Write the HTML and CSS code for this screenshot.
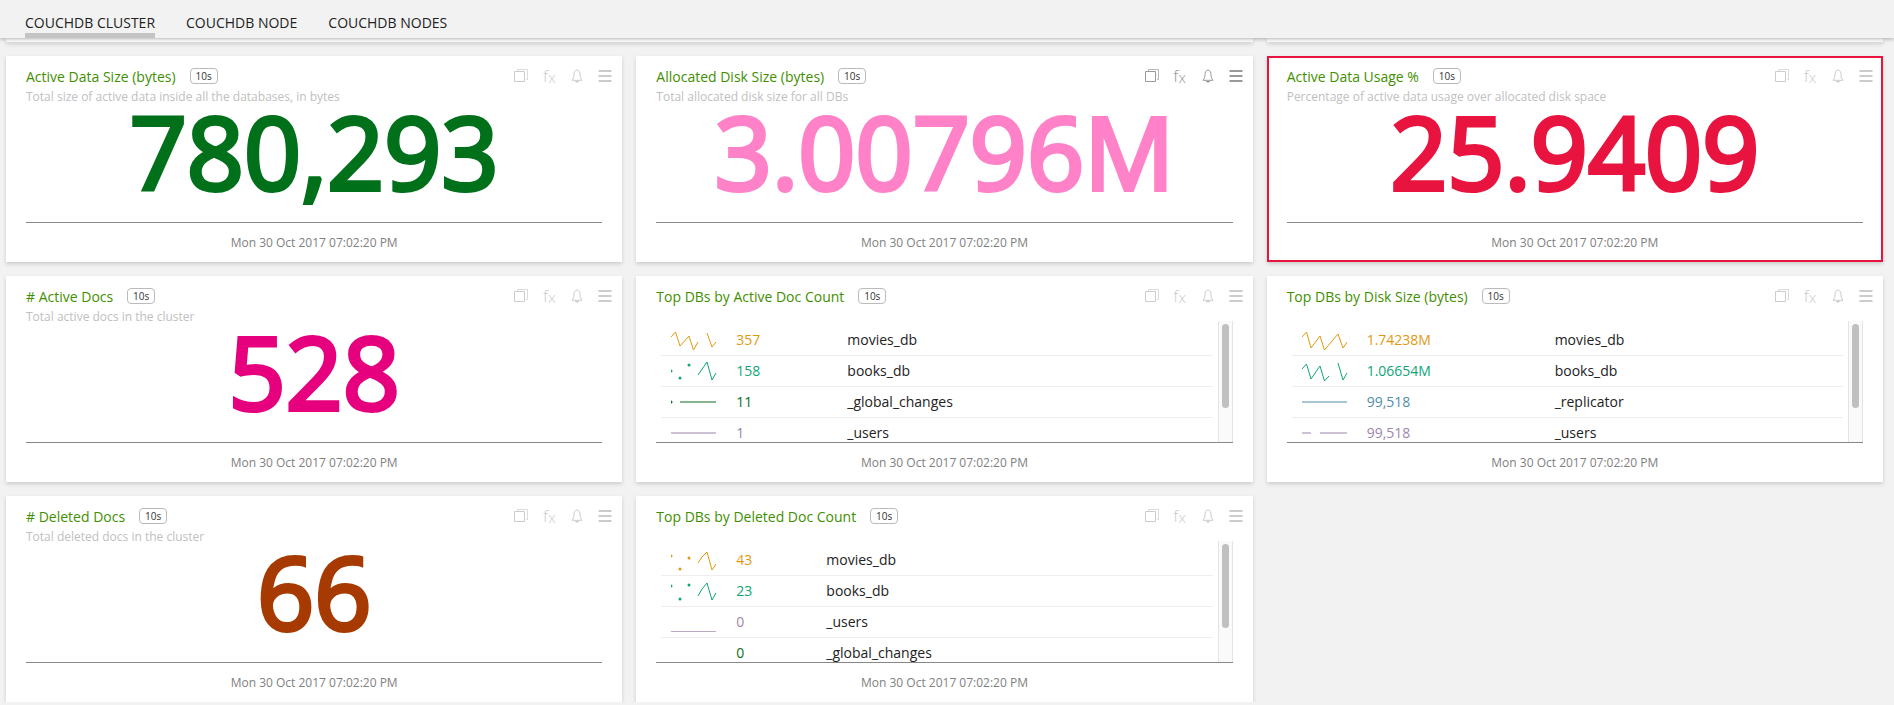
FILE: index.html
```html
<!DOCTYPE html>
<html lang="en">
<head>
<meta charset="utf-8">
<title>CouchDB Cluster</title>
<link rel="stylesheet" href="styles.css">
</head>
<body>
<svg class="defs" aria-hidden="true">
  <symbol id="copy" viewBox="0 0 16 16"><path d="M4.5 3V1.5h10v10H13" fill="none" stroke="currentColor" opacity=".7"/><path d="M1.5 3.5h10v10h-10z" fill="none" stroke="currentColor"/></symbol>
  <symbol id="bell" viewBox="0 0 16 16"><path d="M8 2C5.600 2.400 5 4.600 5 6.500C5 9.500 4.300 10.600 3 12.300h10C11.700 10.600 11 9.500 11 6.500C11 4.600 10.400 2.400 8 2z" fill="none" stroke="currentColor"/><path d="M6 13h4c-.4 2-3.600 2-4 0z" fill="currentColor"/></symbol>
  <symbol id="menu" viewBox="0 0 16 16"><path d="M1.500 3h13M1.500 8h13M1.500 13h13" stroke="currentColor" stroke-width="2"/></symbol>
</svg>
<nav class="tabs">
  <a class="tab active" href="#cluster" aria-current="page">COUCHDB CLUSTER</a>
  <a class="tab" href="#node">COUCHDB NODE</a>
  <a class="tab" href="#nodes">COUCHDB NODES</a>
</nav>
<main class="grid">
  <div class="card-end wide-end"></div><div class="card-end"></div>

  <section class="card">
    <header class="head"><h2 class="title">Active Data Size (bytes)</h2><span class="badge">10s</span>
      <div class="tools"><button class="tool" aria-label="Copy"><svg class="icon"><use href="#copy"/></svg></button><button class="tool fx" aria-label="Function">f<span class="fx-x">x</span></button><button class="tool" aria-label="Alerts"><svg class="icon"><use href="#bell"/></svg></button><button class="tool" aria-label="Menu"><svg class="icon"><use href="#menu"/></svg></button></div></header>
    <p class="desc">Total size of active data inside all the databases, in bytes</p>
    <div class="body"><strong class="value green">780,293</strong></div>
    <footer class="foot">Mon 30 Oct 2017 07:02:20 PM</footer>
  </section>

  <section class="card hovered">
    <header class="head"><h2 class="title">Allocated Disk Size (bytes)</h2><span class="badge">10s</span>
      <div class="tools"><button class="tool" aria-label="Copy"><svg class="icon"><use href="#copy"/></svg></button><button class="tool fx" aria-label="Function">f<span class="fx-x">x</span></button><button class="tool" aria-label="Alerts"><svg class="icon"><use href="#bell"/></svg></button><button class="tool" aria-label="Menu"><svg class="icon"><use href="#menu"/></svg></button></div></header>
    <p class="desc">Total allocated disk size for all DBs</p>
    <div class="body"><strong class="value pink">3.00796M</strong></div>
    <footer class="foot">Mon 30 Oct 2017 07:02:20 PM</footer>
  </section>

  <section class="card alert">
    <header class="head"><h2 class="title">Active Data Usage %</h2><span class="badge">10s</span>
      <div class="tools"><button class="tool" aria-label="Copy"><svg class="icon"><use href="#copy"/></svg></button><button class="tool fx" aria-label="Function">f<span class="fx-x">x</span></button><button class="tool" aria-label="Alerts"><svg class="icon"><use href="#bell"/></svg></button><button class="tool" aria-label="Menu"><svg class="icon"><use href="#menu"/></svg></button></div></header>
    <p class="desc">Percentage of active data usage over allocated disk space</p>
    <div class="body"><strong class="value red">25.9409</strong></div>
    <footer class="foot">Mon 30 Oct 2017 07:02:20 PM</footer>
  </section>

  <section class="card">
    <header class="head"><h2 class="title"># Active Docs</h2><span class="badge">10s</span>
      <div class="tools"><button class="tool" aria-label="Copy"><svg class="icon"><use href="#copy"/></svg></button><button class="tool fx" aria-label="Function">f<span class="fx-x">x</span></button><button class="tool" aria-label="Alerts"><svg class="icon"><use href="#bell"/></svg></button><button class="tool" aria-label="Menu"><svg class="icon"><use href="#menu"/></svg></button></div></header>
    <p class="desc">Total active docs in the cluster</p>
    <div class="body"><strong class="value magenta">528</strong></div>
    <footer class="foot">Mon 30 Oct 2017 07:02:20 PM</footer>
  </section>

  <section class="card">
    <header class="head"><h2 class="title">Top DBs by Active Doc Count</h2><span class="badge">10s</span>
      <div class="tools"><button class="tool" aria-label="Copy"><svg class="icon"><use href="#copy"/></svg></button><button class="tool fx" aria-label="Function">f<span class="fx-x">x</span></button><button class="tool" aria-label="Alerts"><svg class="icon"><use href="#bell"/></svg></button><button class="tool" aria-label="Menu"><svg class="icon"><use href="#menu"/></svg></button></div></header>
    <div class="list">
      <table class="table medium">
        <tr class="row amber"><td class="trend"><svg class="spark" viewBox="0 0 46 22"><path d="M0 8L4.500 3L9 17L18 7L22.500 21L27 13M36 4L41 18L45 13"/></svg></td><td class="num">357</td><td class="name">movies_db</td></tr>
        <tr class="row teal"><td class="trend"><svg class="spark" viewBox="0 0 46 22"><path d="M27 15L36 2L41 20L45 13"/><circle cx="0" cy="11" r="1.500"/><circle cx="9" cy="18" r="1.500"/><circle cx="18" cy="5" r="1.500"/></svg></td><td class="num">158</td><td class="name">books_db</td></tr>
        <tr class="row forest"><td class="trend"><svg class="spark" viewBox="0 0 46 22"><path class="flat" d="M9 11H45"/><circle cx="0" cy="11" r="1.500"/></svg></td><td class="num">11</td><td class="name">_global_changes</td></tr>
        <tr class="row violet"><td class="trend"><svg class="spark" viewBox="0 0 46 22"><path class="flat" d="M0 11H45"/></svg></td><td class="num">1</td><td class="name">_users</td></tr>
      </table>
      <div class="track"><div class="thumb"></div></div>
    </div>
    <footer class="foot">Mon 30 Oct 2017 07:02:20 PM</footer>
  </section>

  <section class="card">
    <header class="head"><h2 class="title">Top DBs by Disk Size (bytes)</h2><span class="badge">10s</span>
      <div class="tools"><button class="tool" aria-label="Copy"><svg class="icon"><use href="#copy"/></svg></button><button class="tool fx" aria-label="Function">f<span class="fx-x">x</span></button><button class="tool" aria-label="Alerts"><svg class="icon"><use href="#bell"/></svg></button><button class="tool" aria-label="Menu"><svg class="icon"><use href="#menu"/></svg></button></div></header>
    <div class="list">
      <table class="table wide">
        <tr class="row amber"><td class="trend"><svg class="spark" viewBox="0 0 46 22"><path d="M0 8L4.500 3L9 19L18 7L22.500 21L36 5L41 19L45 13"/></svg></td><td class="num">1.74238M</td><td class="name">movies_db</td></tr>
        <tr class="row teal"><td class="trend"><svg class="spark" viewBox="0 0 46 22"><path d="M0 9L4.500 4L9 19L18 6L22.500 21L27 16M36 3L41 20L45 13"/></svg></td><td class="num">1.06654M</td><td class="name">books_db</td></tr>
        <tr class="row blue"><td class="trend"><svg class="spark" viewBox="0 0 46 22"><path class="flat" d="M0 11H45"/></svg></td><td class="num">99,518</td><td class="name">_replicator</td></tr>
        <tr class="row violet"><td class="trend"><svg class="spark" viewBox="0 0 46 22"><path class="flat" d="M0 11H9M18 11H45"/></svg></td><td class="num">99,518</td><td class="name">_users</td></tr>
      </table>
      <div class="track"><div class="thumb"></div></div>
    </div>
    <footer class="foot">Mon 30 Oct 2017 07:02:20 PM</footer>
  </section>

  <section class="card">
    <header class="head"><h2 class="title"># Deleted Docs</h2><span class="badge">10s</span>
      <div class="tools"><button class="tool" aria-label="Copy"><svg class="icon"><use href="#copy"/></svg></button><button class="tool fx" aria-label="Function">f<span class="fx-x">x</span></button><button class="tool" aria-label="Alerts"><svg class="icon"><use href="#bell"/></svg></button><button class="tool" aria-label="Menu"><svg class="icon"><use href="#menu"/></svg></button></div></header>
    <p class="desc">Total deleted docs in the cluster</p>
    <div class="body"><strong class="value rust">66</strong></div>
    <footer class="foot">Mon 30 Oct 2017 07:02:20 PM</footer>
  </section>

  <section class="card">
    <header class="head"><h2 class="title">Top DBs by Deleted Doc Count</h2><span class="badge">10s</span>
      <div class="tools"><button class="tool" aria-label="Copy"><svg class="icon"><use href="#copy"/></svg></button><button class="tool fx" aria-label="Function">f<span class="fx-x">x</span></button><button class="tool" aria-label="Alerts"><svg class="icon"><use href="#bell"/></svg></button><button class="tool" aria-label="Menu"><svg class="icon"><use href="#menu"/></svg></button></div></header>
    <div class="list">
      <table class="table narrow">
        <tr class="row amber"><td class="trend"><svg class="spark" viewBox="0 0 46 22"><path d="M27 14L31 8L36 3L41 21L45 15"/><circle cx="0" cy="7" r="1.500"/><circle cx="9" cy="20" r="1.500"/><circle cx="18" cy="9" r="1.500"/></svg></td><td class="num">43</td><td class="name">movies_db</td></tr>
        <tr class="row teal"><td class="trend"><svg class="spark" viewBox="0 0 46 22"><path d="M27 16L31 9L36 3L41 20L45 13"/><circle cx="0" cy="6" r="1.500"/><circle cx="9" cy="19" r="1.500"/><circle cx="18" cy="5" r="1.500"/></svg></td><td class="num">23</td><td class="name">books_db</td></tr>
        <tr class="row violet"><td class="trend"><svg class="spark" viewBox="0 0 46 22"><path d="M0 20.500H45" opacity=".7"/></svg></td><td class="num">0</td><td class="name">_users</td></tr>
        <tr class="row forest"><td class="trend"><svg class="spark" viewBox="0 0 46 22"><circle cx="0" cy="21" r="1"/></svg></td><td class="num">0</td><td class="name">_global_changes</td></tr>
      </table>
      <div class="track"><div class="thumb"></div></div>
    </div>
    <footer class="foot">Mon 30 Oct 2017 07:02:20 PM</footer>
  </section>
</main>
</body>
</html>
```

FILE: styles.css
```css
* { box-sizing: border-box; }
body {
  margin: 0;
  background: #f2f2f2;
  color: #222;
  font-family: "Open Sans", "Noto Sans", sans-serif;
}
.defs { position: absolute; width: 0; height: 0; }

.tabs {
  position: relative;
  z-index: 1;
  display: flex;
  gap: 31px;
  height: 38px;
  padding: 8px 25px 0;
  background: #f2f2f2;
  box-shadow: 0 1px 4px rgba(0, 0, 0, .3);
}
.tab {
  border-bottom: 5px solid transparent;
  color: #222;
  font-size: 14px;
  line-height: 30px;
  height: 30px;
  text-decoration: none;
}
.tab.active { border-bottom-color: #c4c4c4; }

.grid {
  display: grid;
  grid-template-columns: repeat(3, minmax(0, 1fr));
  gap: 14px;
  padding: 0 11px 0 6px;
}
.card, .card-end {
  background: #fff;
  box-shadow: 0 2px 4px rgba(0, 0, 0, .16);
}
.card-end { height: 4px; }
.wide-end { grid-column: span 2; }
.card {
  display: flex;
  flex-direction: column;
}
.card.alert { outline: 2px solid #e8143f; outline-offset: -2px; }

.head {
  display: flex;
  align-items: center;
  height: 28px;
  margin-top: 6px;
  padding: 0 9px 0 20px;
}
.title {
  margin: 0 14px 0 0;
  color: #3f8f00;
  font-size: 14px;
  font-weight: 400;
  white-space: nowrap;
}
.badge {
  width: 28px;
  border: 1px solid #bbb;
  border-radius: 4px;
  color: #333;
  font-size: 10px;
  line-height: 14px;
  text-align: center;
}
.tools {
  display: flex;
  gap: 12px;
  margin-left: auto;
  color: #ccc;
}
.hovered .tools { color: #999; }
.tool {
  width: 16px;
  height: 16px;
  padding: 0;
  border: 0;
  background: none;
  color: inherit;
  cursor: pointer;
}
.icon { display: block; width: 16px; height: 16px; }
.fx {
  font: 300 17px/16px "Open Sans", sans-serif;
  white-space: nowrap;
}
.fx-x { font-size: 15px; vertical-align: -1px; }

.desc {
  height: 14px;
  margin: 0 20px;
  color: #c0c0c0;
  font-size: 12px;
  line-height: 14px;
}
.body {
  display: flex;
  align-items: flex-start;
  justify-content: center;
  height: 118px;
}
.value {
  font-size: 100px;
  font-weight: 400;
  line-height: 94px;
  -webkit-text-stroke: 4px currentColor;
}
.green { color: #00701a; }
.pink { color: #ff82c8; }
.red { color: #e8143f; }
.magenta { color: #e6007e; }
.rust { color: #a63a00; }

.foot {
  height: 40px;
  margin: 0 20px;
  border-top: 1px solid #888;
  color: #808080;
  font-size: 12px;
  line-height: 40px;
  text-align: center;
}

.list {
  display: flex;
  align-items: flex-start;
  gap: 5px;
  height: 121px;
  margin: 11px 20px 0 25px;
  overflow: hidden;
}
.table {
  flex: 1;
  display: table;
  margin-top: 4px;
  border-collapse: separate;
  border-spacing: 0;
  table-layout: fixed;
  font-size: 14px;
}
.row td {
  height: 31px;
  padding: 0;
  border-bottom: 1px solid #eee;
  line-height: 30px;
}
.trend { width: 75px; }
.row .trend { padding-left: 10px; }
.spark {
  display: block;
  width: 46px;
  height: 22px;
  fill: currentColor;
}
.spark path { fill: none; stroke: currentColor; }
.spark .flat { stroke-width: 2px; opacity: .5; }
.num { width: 111px; }
.wide .num { width: 188px; }
.narrow .num { width: 90px; }
.name { color: #222; }
.amber { color: #e09a10; }
.teal { color: #10a576; }
.forest { color: #0b6e1c; }
.violet { color: #9c86ae; }
.blue { color: #4f8da8; }

.track {
  width: 15px;
  height: 121px;
  padding: 3px 3px 0;
  border: solid #e4e4e4;
  border-width: 0 1px;
  background: #fafafa;
}
.thumb {
  height: 84px;
  border-radius: 4px;
  background: #c0c0c0;
}
```
